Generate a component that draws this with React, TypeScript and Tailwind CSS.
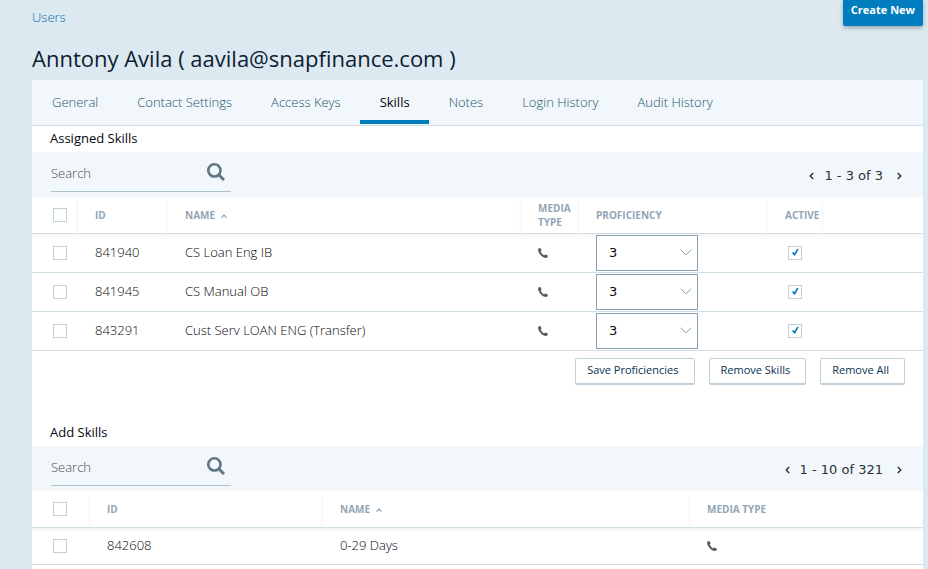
const tabs = ["General", "Contact Settings", "Access Keys", "Skills", "Notes", "Login History", "Audit History"];

const assigned = [
    { id: "841940", name: "CS Loan Eng IB" },
    { id: "841945", name: "CS Manual OB" },
    { id: "843291", name: "Cust Serv LOAN ENG (Transfer)" },
];

const available = [{ id: "842608", name: "0-29 Days" }];

const th = "h-[37px] border-b border-[#cfdee7] text-left text-[10px] leading-[14px] font-bold text-[#93a5b5] shadow-[0_3px_4px_-1px_rgba(0,0,0,0.06)]";
const thText = "border-l border-l-[#f8f8f8] pl-[17px]";
const td = "border-b border-[#cfdee7] pl-[18px]";
const checkTd = "border-b border-[#cfdee7] pl-[21px]";

const Checkbox = ({ label, checked = false }: { label: string; checked?: boolean }) => (
    <span className="relative block size-3.5">
        <input type="checkbox" aria-label={label} defaultChecked={checked} className="peer block size-3.5 appearance-none border border-[#bfd2dc] bg-white" />
        <svg viewBox="0 0 14 14" className="pointer-events-none absolute inset-0 hidden size-3.5 peer-checked:block">
            <path d="M4 6.8 L5.3 6 L6.3 7.2 L9 3 L10.8 2.8 L7.2 9.4 L5.8 9.4 Z" fill="#0b77b8" />
        </svg>
    </span>
);

const Phone = () => (
    <svg viewBox="0 0 10 10" className="size-2.5" fill="#5a5a5a">
        <path d="M0.4 0.7 C1.1 -0.1 2.2 -0.1 2.7 0.6 L3.5 2.2 C3.8 2.8 3.4 3.3 2.6 3.6 C3.1 5 4.7 6.8 6.3 7.4 C6.7 6.7 7.1 6.4 7.6 6.6 L9.5 7.6 C10.1 8 10 8.8 9.1 9.6 C8.2 10.2 6.6 10 4.8 8.9 C3 7.8 1.5 6 0.7 4.3 C0.1 3 -0.1 1.5 0.4 0.7 Z" />
    </svg>
);

const Caret = () => (
    <svg viewBox="0 0 6 4" className="ml-1.5 inline-block h-1 w-1.5" fill="none" stroke="#93a5b5" strokeWidth="1.3">
        <path d="M0.5 3.6 L3 1 L5.5 3.6" />
    </svg>
);

const Arrow = ({ label, path }: { label: string; path: string }) => (
    <button aria-label={label} className="flex w-[5px] items-center">
        <svg viewBox="0 0 5 8" className="h-2 w-[5px]" fill="none" stroke="#1f2a33" strokeWidth="1.3">
            <path d={path} />
        </svg>
    </button>
);

const Toolbar = ({ label, range }: { label: string; range: string }) => (
    <div className="flex h-[45px] items-start justify-between bg-[#f1f7fb] pr-[21px] pl-[19px]">
        <div className="flex h-10 w-[180px] items-center border-b border-[#aec3cf]">
            <input type="text" placeholder="Search" aria-label={label} className="w-[156px] pt-0.5 text-[13px] leading-5 outline-none placeholder:text-[#454e54]" />
            <button aria-label="Search" className="size-[18px]">
                <svg viewBox="0 0 18 18" className="size-[18px]" fill="none" stroke="#607783">
                    <circle cx="7.4" cy="7.4" r="6.1" strokeWidth="2.6" />
                    <path d="M11.8 11.8 L17 17" strokeWidth="3" />
                </svg>
            </button>
        </div>
        <div className="flex h-12 items-center font-['DejaVu_Sans',sans-serif] text-[13px] font-normal text-[#2a3138]">
            <Arrow label="Previous page" path="M4.2 1 L1.2 4 L4.2 7" />
            <span className="mr-3.5 ml-2.5">{range}</span>
            <Arrow label="Next page" path="M0.8 1 L3.8 4 L0.8 7" />
        </div>
    </div>
);

const ActionButton = ({ text }: { text: string }) => (
    <button className="h-[27px] rounded-[2px] border border-b-2 border-[#c0d0db] bg-white pr-[15px] pb-0.5 pl-[11px] text-[11px] leading-4 font-normal text-[#0a3250]">
        {text}
    </button>
);

export default function App() {
    return (
        <div className="flex min-h-screen flex-col bg-[#dde9f1] pr-[5px] pl-8 font-['Open_Sans',sans-serif] text-[13px] font-light text-[#05080c]">
            <header className="flex h-20 items-start justify-between">
                <div>
                    <a href="#users" className="mt-2 block leading-[18px] text-[#006fb0]">Users</a>
                    <h1 className="mt-4 text-[22px] leading-8 font-normal text-[#0c2033]">Anntony Avila ( aavila@snapfinance.com )</h1>
                </div>
                <button className="h-[26px] rounded-b-[2px] bg-[#007dbf] px-2 pb-1.5 text-[11px] font-bold text-white shadow-[0_2px_4px_rgba(0,0,0,0.3)]">
                    Create New
                </button>
            </header>

            <main className="flex-1 bg-white">
                <nav className="flex h-[46px] border-b border-[#cfdee7] bg-[#f1f7fb]">
                    {tabs.map((tab) => (
                        <a
                            key={tab}
                            href="#tab"
                            className={
                                tab === "Skills"
                                    ? "h-11 border-b-4 border-[#007dbf] pr-[19px] pl-5 leading-[44px] font-normal text-[#05080c]"
                                    : "h-11 pr-[19px] pl-5 leading-[44px] text-[#1f566b]"
                            }
                        >
                            {tab}
                        </a>
                    ))}
                </nav>

                <section>
                    <h2 className="h-[26px] pl-[18px] leading-[25px] font-normal">Assigned Skills</h2>
                    <Toolbar label="Search assigned skills" range="1 - 3 of 3" />
                    <table className="w-full table-fixed border-separate border-spacing-0">
                        <colgroup>
                            <col className="w-[45px]" />
                            <col className="w-[90px]" />
                            <col />
                            <col className="w-[58px]" />
                            <col className="w-[189px]" />
                            <col className="w-[55px]" />
                            <col className="w-[101px]" />
                        </colgroup>
                        <thead>
                            <tr>
                                <th className={`${th} pl-[21px]`}><Checkbox label="Select all assigned skills" /></th>
                                <th className={`${th} ${thText}`}>ID</th>
                                <th className={`${th} ${thText}`}>NAME<Caret /></th>
                                <th className={`${th} ${thText}`}>MEDIA TYPE</th>
                                <th className={`${th} ${thText}`}>PROFICIENCY</th>
                                <th className={`${th} ${thText}`}>ACTIVE</th>
                                <th className={`${th} ${thText}`}></th>
                            </tr>
                        </thead>
                        <tbody>
                            {assigned.map((skill) => (
                                <tr key={skill.id} className="h-[39px]">
                                    <td className={checkTd}><Checkbox label={`Select ${skill.name}`} /></td>
                                    <td className={td}>{skill.id}</td>
                                    <td className={td}>{skill.name}</td>
                                    <td className={td}><Phone /></td>
                                    <td className={td}>
                                        <div className="relative h-9 w-[102px]">
                                            <select
                                                aria-label={`Proficiency for ${skill.name}`}
                                                defaultValue="3"
                                                className="h-9 w-full appearance-none border border-[#86a2b3] bg-white pl-3 font-['DejaVu_Sans',sans-serif] text-[13px] font-normal"
                                            >
                                                <option>1</option>
                                                <option>2</option>
                                                <option>3</option>
                                            </select>
                                            <svg viewBox="0 0 12 7" className="pointer-events-none absolute top-[14px] right-1.5 h-[7px] w-3" fill="none" stroke="#8aa0ab">
                                                <path d="M0.7 0.7 L6 5.8 L11.3 0.7" />
                                            </svg>
                                        </div>
                                    </td>
                                    <td className={checkTd}><Checkbox label={`${skill.name} active`} checked /></td>
                                    <td className={td}></td>
                                </tr>
                            ))}
                        </tbody>
                    </table>
                    <div className="flex h-[69px] items-start justify-end gap-3.5 pt-[7px] pr-[18px]">
                        <ActionButton text="Save Proficiencies" />
                        <ActionButton text="Remove Skills" />
                        <ActionButton text="Remove All" />
                    </div>
                </section>

                <section>
                    <h2 className="h-[26px] pl-[18px] leading-[25px] font-normal">Add Skills</h2>
                    <Toolbar label="Search skills to add" range="1 - 10 of 321" />
                    <table className="w-full table-fixed border-separate border-spacing-0">
                        <colgroup>
                            <col className="w-[57px]" />
                            <col className="w-[233px]" />
                            <col />
                            <col className="w-[234px]" />
                        </colgroup>
                        <thead>
                            <tr>
                                <th className={`${th} pl-[21px]`}><Checkbox label="Select all skills to add" /></th>
                                <th className={`${th} ${thText}`}>ID</th>
                                <th className={`${th} ${thText}`}>NAME<Caret /></th>
                                <th className={`${th} ${thText}`}>MEDIA TYPE</th>
                            </tr>
                        </thead>
                        <tbody>
                            {available.map((skill) => (
                                <tr key={skill.id} className="h-[37px]">
                                    <td className={checkTd}><Checkbox label={`Select ${skill.name}`} /></td>
                                    <td className={td}>{skill.id}</td>
                                    <td className={td}>{skill.name}</td>
                                    <td className={td}><Phone /></td>
                                </tr>
                            ))}
                        </tbody>
                    </table>
                </section>
            </main>
        </div>
    );
}
